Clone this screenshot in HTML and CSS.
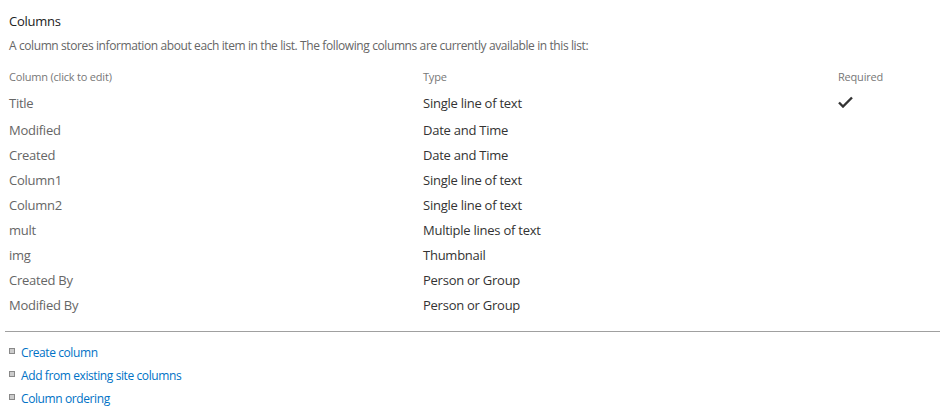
FILE: index.html
```html
<!DOCTYPE html>
<html lang="en">
<head>
    <meta charset="UTF-8">
    <title>List Settings - Columns</title>
    <link rel="stylesheet" href="styles.css">
</head>
<body>
    <div class="section">
        <h3 class="section-title">Columns</h3>
        <p class="section-desc">A column stores information about each item in the list. The following columns are currently available in this list:</p>

        <div class="columns-table">
            <div class="row head">
                <div>Column (click to edit)</div>
                <div>Type</div>
                <div>Required</div>
            </div>
            <div class="row first">
                <div class="name">Title</div>
                <div class="type">Single line of text</div>
                <div class="req">
                    <svg width="15" height="12" viewBox="0 0 15 12"><path d="M1 6.5 L5 10.5 L14 1.5" fill="none" stroke="#333" stroke-width="2.4"/></svg>
                </div>
            </div>
            <div class="row"><div class="name">Modified</div><div class="type">Date and Time</div><div></div></div>
            <div class="row"><div class="name">Created</div><div class="type">Date and Time</div><div></div></div>
            <div class="row"><div class="name">Column1</div><div class="type">Single line of text</div><div></div></div>
            <div class="row"><div class="name">Column2</div><div class="type">Single line of text</div><div></div></div>
            <div class="row"><div class="name">mult</div><div class="type">Multiple lines of text</div><div></div></div>
            <div class="row"><div class="name">img</div><div class="type">Thumbnail</div><div></div></div>
            <div class="row"><div class="name">Created By</div><div class="type">Person or Group</div><div></div></div>
            <div class="row"><div class="name">Modified By</div><div class="type">Person or Group</div><div></div></div>
        </div>
    </div>

    <hr class="divider">

    <ul class="actions">
        <li><a href="#">Create column</a></li>
        <li><a href="#">Add from existing site columns</a></li>
        <li><a href="#">Column ordering</a></li>
    </ul>
</body>
</html>
```

FILE: styles.css
```css
body {
    margin: 0;
    font-family: "Open Sans", "Noto Sans", sans-serif;
    background-color: #fff;
    color: #333;
}

.section {
    padding: 12px 0 0 9px;
}

.section-title {
    margin: 0;
    font-size: 13px;
    font-weight: normal;
    line-height: 18px;
    color: #222;
    letter-spacing: -0.25px;
}

.section-desc {
    margin: 8px 0 0;
    font-size: 12px;
    line-height: 16px;
    color: #666;
    letter-spacing: -0.4px;
}

.columns-table {
    margin-top: 11px;
}

.row {
    display: grid;
    grid-template-columns: 414px 415px 1fr;
    height: 25px;
    align-items: center;
    font-size: 13px;
    letter-spacing: -0.25px;
}

.row.head {
    height: 22px;
    font-size: 11px;
    color: #777;
    letter-spacing: -0.2px;
}

.row.first {
    height: 30px;
    padding-top: 1px;
    box-sizing: border-box;
}

.name {
    color: #666;
}

.type {
    color: #333;
}

.req svg {
    display: block;
    margin-top: -2px;
}

.divider {
    margin: 14px 0 0 5px;
    border: none;
    border-top: 1px solid #a0a0a0;
}

.actions {
    list-style: none;
    margin: 0;
    padding: 9px 0 0 9px;
}

.actions li {
    display: flex;
    align-items: center;
    height: 23px;
    font-size: 12px;
    letter-spacing: -0.4px;
}

.actions li::before {
    content: "";
    width: 4px;
    height: 4px;
    margin-right: 6px;
    margin-top: -3px;
    border: 1px solid #888;
    background-color: #ccc;
}

.actions a {
    color: #0072c6;
    text-decoration: none;
}
```
